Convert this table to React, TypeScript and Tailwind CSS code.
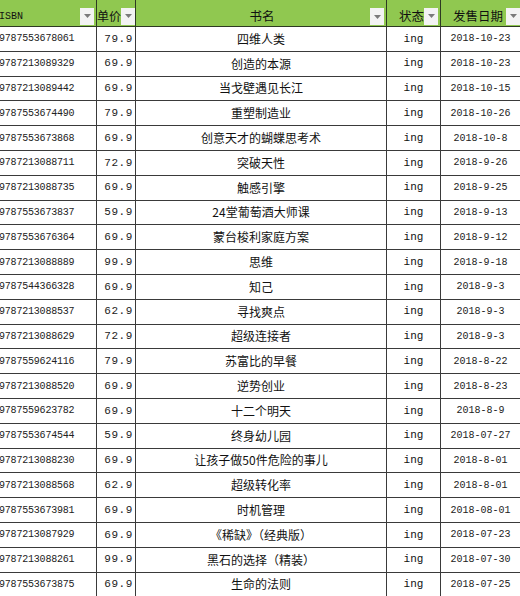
const rows: [string, string, string, string][] = [
  ['9787553678061', '79.9', '四维人类', '2018-10-23'],
  ['9787213089329', '69.9', '创造的本源', '2018-10-23'],
  ['9787213089442', '69.9', '当戈壁遇见长江', '2018-10-15'],
  ['9787553674490', '79.9', '重塑制造业', '2018-10-26'],
  ['9787553673868', '69.9', '创意天才的蝴蝶思考术', '2018-10-8'],
  ['9787213088711', '72.9', '突破天性', '2018-9-26'],
  ['9787213088735', '69.9', '触感引擎', '2018-9-25'],
  ['9787553673837', '59.9', '24堂葡萄酒大师课', '2018-9-13'],
  ['9787553676364', '69.9', '蒙台梭利家庭方案', '2018-9-12'],
  ['9787213088889', '99.9', '思维', '2018-9-18'],
  ['9787544366328', '69.9', '知己', '2018-9-3'],
  ['9787213088537', '62.9', '寻找爽点', '2018-9-3'],
  ['9787213088629', '72.9', '超级连接者', '2018-9-3'],
  ['9787559624116', '79.9', '苏富比的早餐', '2018-8-22'],
  ['9787213088520', '69.9', '逆势创业', '2018-8-23'],
  ['9787559623782', '69.9', '十二个明天', '2018-8-9'],
  ['9787553674544', '59.9', '终身幼儿园', '2018-07-27'],
  ['9787213088230', '69.9', '让孩子做50件危险的事儿', '2018-8-01'],
  ['9787213088568', '62.9', '超级转化率', '2018-8-01'],
  ['9787553673981', '69.9', '时机管理', '2018-08-01'],
  ['9787213087929', '69.9', '《稀缺》（经典版）', '2018-07-23'],
  ['9787213088261', '99.9', '黑石的选择（精装）', '2018-07-30'],
  ['9787553673875', '69.9', '生命的法则', '2018-07-25'],
];

const cjk = "font-['Noto_Sans_CJK_SC',sans-serif]";
const mono = "font-['Liberation_Mono','Noto_Sans_CJK_SC',monospace]";

function Drop() {
  return (
    <span className="flex h-[17px] w-[14px] shrink-0 items-center justify-center bg-[#f3f3f3]">
      <svg width="7" height="4" viewBox="0 0 7 4">
        <path d="M0 0h7L3.5 4z" fill="#7a7a7a" />
      </svg>
    </span>
  );
}

export default function App() {
  return (
    <div className="h-[596px] w-[520px] overflow-hidden bg-white text-[#111]">
      {/* Header */}
      <div className="flex h-[27px] whitespace-nowrap bg-[#90c850] text-[12.5px]">
        <div className="flex w-[97px] shrink-0 items-center overflow-hidden border-r border-b border-[#2d3a22] pt-[6px]">
          <span className={`${mono} ml-[-1px] text-[10px]`}>ISBN</span>
          <span className="ml-auto mr-[2px]"><Drop /></span>
        </div>
        <div className={`${cjk} flex w-[39px] shrink-0 items-center overflow-hidden border-r border-b border-[#2d3a22] pt-[6px]`}>
          <span className="shrink-0 text-[12px]">单价</span>
          <span className="ml-auto mr-[1px]"><Drop /></span>
        </div>
        <div className={`${cjk} relative flex w-[251px] shrink-0 items-center justify-center border-r border-b border-[#2d3a22] pt-[6px]`}>
          <span className="pl-[2px]">书名</span>
          <span className="absolute right-[2px] top-[8px]"><Drop /></span>
        </div>
        <div className={`${cjk} flex w-[54px] shrink-0 items-center overflow-hidden border-r border-b border-[#2d3a22] pt-[6px]`}>
          <span className="ml-[12px] shrink-0">状态</span>
          <span className="ml-auto mr-[2px]"><Drop /></span>
        </div>
        <div className={`${cjk} flex w-[79px] shrink-0 items-center overflow-hidden border-b border-[#2d3a22] pt-[6px]`}>
          <span className="ml-[12px] shrink-0">发售日期</span>
          <span className="ml-auto"><Drop /></span>
        </div>
      </div>

      {/* Rows */}
      {rows.map(([isbn, price, title, date]) => (
        <div key={isbn} className="flex h-[24.8px] whitespace-nowrap">
          <div className="flex w-[97px] shrink-0 items-center overflow-hidden border-r border-b border-[#3a3a3a]">
            <span className={`${mono} ml-[-1px] text-[10px] tracking-[-0.2px] text-[#222]`}>{isbn}</span>
          </div>
          <div className="flex w-[39px] shrink-0 items-center justify-end border-r border-b border-[#3a3a3a] pr-[2px]">
            <span className={`${mono} text-[11px] tracking-[0.6px] text-[#222]`}>{price}</span>
          </div>
          <div className={`${cjk} flex w-[251px] shrink-0 items-center justify-center border-r border-b border-[#3a3a3a] text-[12px]`}>
            {title}
          </div>
          <div className="flex w-[54px] shrink-0 items-center justify-center border-r border-b border-[#3a3a3a]">
            <span className={`${mono} text-[11px]`}>ing</span>
          </div>
          <div className="flex w-[79px] shrink-0 items-center justify-center border-b border-[#3a3a3a]">
            <span className={`${mono} text-[10px] text-[#222]`}>{date}</span>
          </div>
        </div>
      ))}
    </div>
  );
}
